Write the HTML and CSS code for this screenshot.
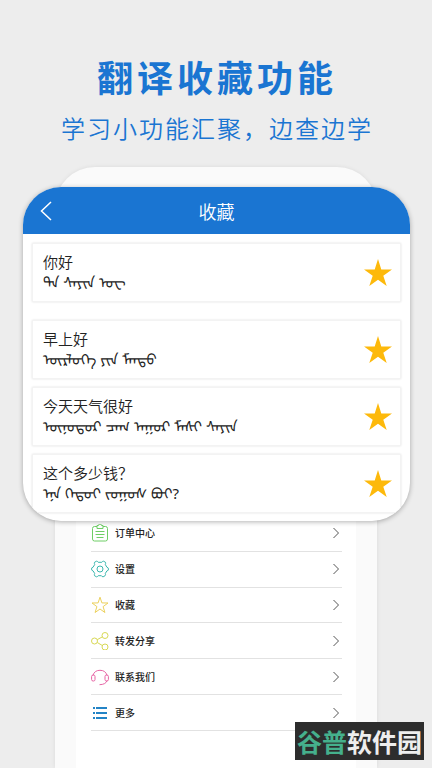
FILE: index.html
```html
<!DOCTYPE html>
<html lang="zh-CN">
<head>
<meta charset="utf-8">
<meta name="viewport" content="width=device-width, initial-scale=1">
<title>翻译收藏功能</title>
<link rel="stylesheet" href="styles.css">
</head>
<body>
<svg class="defs" aria-hidden="true">
  <symbol id="star" viewBox="0 0 28 28"><path d="M14 0l3.3 10.4H28l-8.7 6.4L22.700 27 14 20.700 5.300 27l3.400-10.200L0 10.400h10.700z"/></symbol>
  <symbol id="chevron" viewBox="0 0 6 12"><path d="M.5 1l5 5-5 5"/></symbol>
</svg>
<header class="hero">
  <h1>翻译收藏功能</h1>
  <p>学习小功能汇聚，边查边学</p>
</header>
<main class="stage">
  <section class="phone">
    <nav class="menu">
      <a class="row" href="#orders">
        <svg class="icon green" viewBox="0 0 18 18"><path d="M6 2.500H3.500a2 2 0 0 0-2 2v10.500a2 2 0 0 0 2 2h11a2 2 0 0 0 2-2V4.500a2 2 0 0 0-2-2H12M6 1.500h1.500a1.500 1.500 0 0 1 3 0H12v3H6zM4.500 7.500h9M4.500 10.500h9M5.500 13.500h7"/></svg>
        <span>订单中心</span><svg class="chevron"><use href="#chevron"/></svg></a>
      <a class="row" href="#settings">
        <svg class="icon teal" viewBox="0 0 18 18"><path d="M5.500 1.200q1.200 0 1.700 1.100h3.600q.5-1.100 1.700-1.100l2 1.100q.4 1.200-.2 2.200l1.500 2.600q1.500.3 1.700 1.900t-1.700 2l-1.500 2.500q.6 1-.2 2.200l-2 1.100q-1.200 0-1.700-1.100H7.200q-.5 1.100-1.700 1.100l-2-1.100q-.4-1.200.2-2.200L2.200 11Q.5 10.600.5 9t1.700-1.900l1.500-2.600q-.6-1-.2-2.200z"/><circle cx="9" cy="9" r="3"/></svg>
        <span>设置</span><svg class="chevron"><use href="#chevron"/></svg></a>
      <a class="row" href="#favorites">
        <svg class="icon yellow" viewBox="0 0 18 18"><path d="M9 1.200l1.900 5.700 6.100.1-4.900 3.600 1.800 5.900L9 13l-4.900 3.500 1.800-5.900L1 7l6.100-.1z"/></svg>
        <span>收藏</span><svg class="chevron"><use href="#chevron"/></svg></a>
      <a class="row" href="#share">
        <svg class="icon lime" viewBox="0 0 18 18"><circle cx="3.500" cy="9" r="3"/><circle cx="14" cy="3.500" r="3"/><circle cx="14" cy="15" r="3"/><path d="M6.300 7.600l5-2.700M6.300 10.500l5 3"/></svg>
        <span>转发分享</span><svg class="chevron"><use href="#chevron"/></svg></a>
      <a class="row" href="#contact">
        <svg class="icon pink" viewBox="0 0 18 18"><path d="M2 7.500a7.200 6.800 0 0 1 14 0M16 12.500q-1 4-7.500 4.200"/><rect x=".6" y="7" width="3.400" height="6" rx="1.500"/><rect x="14" y="7" width="3.400" height="6" rx="1.500"/></svg>
        <span>联系我们</span><svg class="chevron"><use href="#chevron"/></svg></a>
      <a class="row" href="#more">
        <svg class="icon blue" viewBox="0 0 18 18"><path d="M2 4h2M5 4h11M2 9h2M5 9h11M2 14h2M5 14h11"/></svg>
        <span>更多</span><svg class="chevron"><use href="#chevron"/></svg></a>
    </nav>
  </section>
  <section class="card">
    <header class="bar">
      <button class="back" aria-label="返回"><svg viewBox="0 0 12 20"><path d="M11 1L1.500 10l9.500 9"/></svg></button>
      <h2>收藏</h2>
    </header>
    <ul class="list">
      <li class="item first"><div><p class="zh">你好</p><p class="mn" lang="mn">ᠲᠠ ᠰᠠᠶᠢᠨ ᠣᠸ</p></div><button class="fav" aria-label="取消收藏"><svg><use href="#star"/></svg></button></li>
      <li class="item"><div><p class="zh">早上好</p><p class="mn" lang="mn">ᠥᠷᠯᠥᠭᠡ ᠶᠢᠨ ᠮᠡᠨᠳᠦ</p></div><button class="fav" aria-label="取消收藏"><svg><use href="#star"/></svg></button></li>
      <li class="item"><div><p class="zh">今天天气很好</p><p class="mn" lang="mn">ᠥᠨᠥᠳᠥᠷ ᠴᠠᠭ ᠠᠭᠤᠷ ᠮᠠᠰᠢ ᠰᠠᠶᠢᠨ</p></div><button class="fav" aria-label="取消收藏"><svg><use href="#star"/></svg></button></li>
      <li class="item"><div><p class="zh">这个多少钱？</p><p class="mn" lang="mn">ᠡᠨᠡ ᠬᠡᠳᠦᠢ ᠵᠣᠭᠣᠰ ᠪᠤᠢ?</p></div><button class="fav" aria-label="取消收藏"><svg><use href="#star"/></svg></button></li>
    </ul>
  </section>
</main>
<aside class="mark"><span>谷普</span>软件园</aside>
</body>
</html>
```

FILE: styles.css
```css
* { box-sizing: border-box; }
body {
  margin: 0;
  min-height: 100vh;
  display: flex;
  flex-direction: column;
  position: relative;
  background: #ededed;
  color: #222;
  font-family: "Noto Sans CJK SC", "Noto Sans", sans-serif;
}
h1, h2, p, ul { margin: 0; padding: 0; }
button { border: 0; padding: 0; background: none; }
svg { display: block; fill: none; }
.defs { position: absolute; width: 0; height: 0; }

.hero { padding: 50px 0 0 2px; text-align: center; color: #1a75d2; }
.hero h1 { font-size: 36px; line-height: 52px; font-weight: 700; letter-spacing: 4px; }
.hero p { font-size: 24px; line-height: 32px; font-weight: 350; margin-top: 10px; letter-spacing: 2px; }

.stage { flex: 1; display: grid; margin-top: 23px; }
.phone, .card { grid-area: 1 / 1; }
.phone {
  margin: 0 55px;
  padding: 348px 21px 0;
  background: #fafafa;
  border-radius: 40px 40px 0 0;
  box-shadow: 0 0 4px rgba(0, 0, 0, .08);
}
.menu {
  height: 100%;
  padding: 1px 14px 37px 15px;
  background: #fff;
  display: grid;
  grid-template-rows: repeat(6, 1fr);
}
.row {
  display: flex;
  align-items: center;
  gap: 6px;
  border-bottom: 1px solid #e2e2e2;
  color: #222;
  font-size: 10px;
  line-height: 16px;
  font-weight: 500;
  text-decoration: none;
}
.row span { flex: 1; }
.icon { width: 18px; height: 18px; stroke-width: 1; }
.green { stroke: #6fce66; }
.teal { stroke: #3bb7ae; }
.yellow { stroke: #ecd15d; }
.lime { stroke: #d8d855; }
.pink { stroke: #e765a5; }
.blue { stroke: #2484c6; stroke-width: 2; }
.chevron { width: 6px; height: 12px; margin-right: 3px; stroke: #555; }

.card {
  align-self: start;
  margin: 20px 22px 0 23px;
  background: #fff;
  border-radius: 38px;
  overflow: hidden;
  box-shadow: 0 1px 5px rgba(0, 0, 0, .3);
}
.bar {
  display: grid;
  grid-template-columns: 48px 1fr 48px;
  align-items: center;
  height: 47px;
  background: #1a75d2;
  color: #fff;
}
.bar h2 { font-size: 18px; line-height: 24px; font-weight: 350; text-align: center; }
.back { padding-left: 17px; }
.back svg { width: 12px; height: 20px; stroke: #fff; stroke-width: 1.5; }

.list { list-style: none; padding: 9px 9px 8px; display: grid; gap: 8px; }
.item {
  display: flex;
  align-items: center;
  justify-content: space-between;
  min-height: 59px;
  padding: 0 8px 0 10px;
  border: 1px solid #f3f3f3;
  box-shadow: 0 0 2px rgba(0, 0, 0, .12);
}
.item div { padding-bottom: 8px; }
.first { margin-bottom: 10px; }
.zh { font-size: 15px; line-height: 20px; font-weight: 350; }
.mn { font-size: 15px; line-height: 14px; white-space: nowrap; font-family: "Noto Sans Mongolian", "Mongolian Baiti", "Noto Sans", sans-serif; }
.fav svg { width: 28px; height: 28px; fill: #fdb90b; }

.mark {
  position: absolute;
  right: 8px;
  bottom: 8px;
  padding: 0 2px;
  background: #2d2d2d;
  color: #eee;
  font-size: 25px;
  line-height: 38px;
  font-weight: 700;
}
.mark span { color: #45b08c; }
```
